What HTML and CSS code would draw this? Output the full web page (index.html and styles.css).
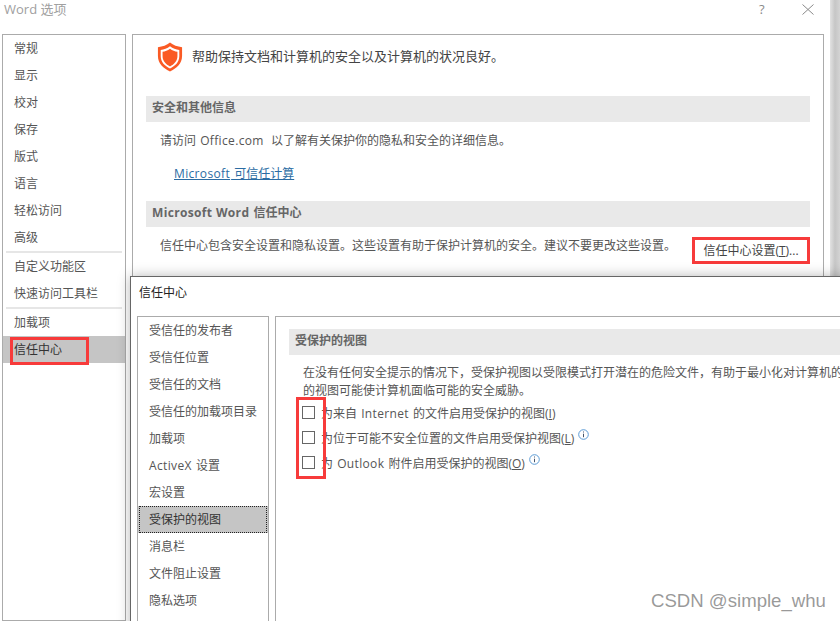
FILE: index.html
```
<!DOCTYPE html>
<html lang="zh-CN">
<head>
<meta charset="utf-8">
<title>Word 选项</title>
<link rel="stylesheet" href="styles.css">
</head>
<body>
<div class="desktop">
  <section class="win-back">
    <header class="titlebar">
      <span class="win-title">Word 选项</span>
      <span class="help">?</span>
      <svg class="close" width="12" height="11" viewBox="0 0 12 11"><path d="M.5.5l11 10M11.500.5l-11 10" stroke="#8a8a8a" fill="none"/></svg>
    </header>
    <div class="back-body">
      <nav class="nav back-nav">
        <div class="item">常规</div>
        <div class="item">显示</div>
        <div class="item">校对</div>
        <div class="item">保存</div>
        <div class="item">版式</div>
        <div class="item">语言</div>
        <div class="item">轻松访问</div>
        <div class="item">高级</div>
        <div class="sep"></div>
        <div class="item">自定义功能区</div>
        <div class="item">快速访问工具栏</div>
        <div class="sep"></div>
        <div class="item">加载项</div>
        <div class="item selected">信任中心</div>
      </nav>
      <main class="back-main">
        <div class="hero">
          <svg class="shield" width="26" height="30" viewBox="0 0 28 32"><path d="M14 .5C10.500 3.500 6 5 1 5.500V15C1 23 7 28.500 14 31.500C21 28.500 27 23 27 15V5.500C22 5 17.500 3.500 14 .5Z" fill="#fa5a24"/><path d="M14 4.500C11 6.700 7.500 8 4 8.500V15.200C4 21.500 8.500 25.800 14 28.300C19.500 25.800 24 21.500 24 15.200V8.500C20.500 8 17 6.700 14 4.500Z" fill="#fff"/><path d="M14 7C11.500 8.800 8.700 9.900 6 10.400V15.200C6 20.300 9.700 24 14 26.100C18.300 24 22 20.300 22 15.200V10.400C19.300 9.900 16.500 8.800 14 7Z" fill="#fa5a24"/></svg>
          <span class="hero-text">帮助保持文档和计算机的安全以及计算机的状况良好。</span>
        </div>
        <h2 class="band band-first">安全和其他信息</h2>
        <p class="line visit">请访问 <span class="lat">Office.com</span>&nbsp; 以了解有关保护你的隐私和安全的详细信息。</p>
        <a class="link"><span class="lat">Microsoft</span> 可信任计算</a>
        <h2 class="band"><span class="lat">Microsoft Word</span> 信任中心</h2>
        <div class="trust-row">
          <p class="line">信任中心包含安全设置和隐私设置。这些设置有助于保护计算机的安全。建议不要更改这些设置。</p>
          <div class="btn-mark">信任中心设置(<u>T</u>)...</div>
        </div>
      </main>
    </div>
  </section>

  <section class="win-front">
    <header class="front-title">信任中心</header>
    <div class="front-body">
      <nav class="nav front-nav">
        <div class="item">受信任的发布者</div>
        <div class="item">受信任位置</div>
        <div class="item">受信任的文档</div>
        <div class="item">受信任的加载项目录</div>
        <div class="item">加载项</div>
        <div class="item"><span class="lat">ActiveX</span> 设置</div>
        <div class="item">宏设置</div>
        <div class="item selected focused"><span>受保护的视图</span></div>
        <div class="item">消息栏</div>
        <div class="item">文件阻止设置</div>
        <div class="item">隐私选项</div>
      </nav>
      <main class="front-main">
        <h2 class="band">受保护的视图</h2>
        <div class="desc">
          <p>在没有任何安全提示的情况下，受保护视图以受限模式打开潜在的危险文件，有助于最小化对计算机的</p>
          <p>的视图可能使计算机面临可能的安全威胁。</p>
        </div>
        <div class="checks">
          <label class="check"><span class="box"></span><span>为来自 <span class="lat">Internet</span> 的文件启用受保护的视图(<u>I</u>)</span></label>
          <label class="check"><span class="box"></span><span>为位于可能不安全位置的文件启用受保护视图(<u>L</u>)</span><svg class="info" width="11" height="11" viewBox="0 0 11 11"><circle cx="5.500" cy="5.500" r="4.800" fill="none" stroke="#5b9bd5"/><path d="M5.500 2.500v1M5.500 4.700v3.500" stroke="#44546a"/></svg></label>
          <label class="check"><span class="box"></span><span>为 <span class="lat">Outlook</span> 附件启用受保护的视图(<u>O</u>)</span><svg class="info" width="11" height="11" viewBox="0 0 11 11"><circle cx="5.500" cy="5.500" r="4.800" fill="none" stroke="#5b9bd5"/><path d="M5.500 2.500v1M5.500 4.700v3.500" stroke="#44546a"/></svg></label>
        </div>
      </main>
    </div>
  </section>

  <div class="mark mark-nav"></div>
  <div class="mark mark-checks"></div>
  <div class="watermark">CSDN @simple_whu</div>
</div>
</body>
</html>
```

FILE: styles.css
```
* { box-sizing: border-box; }
html, body { margin: 0; padding: 0; }
body { font-family: "Open Sans", "Noto Sans CJK SC", sans-serif; font-size: 12px; color: #444; background: #fff; }
.desktop { position: relative; width: 840px; height: 621px; overflow: hidden; background: linear-gradient(90deg, #e2e2e2 830px, #c6c6c6 835px, #d4d4d4 840px); }
h2, p { margin: 0; font-weight: normal; }
.lat { letter-spacing: .35px; margin: 0 1px; }

.win-back { position: absolute; left: 0; top: 0; width: 830px; height: 621px; background: #fff; display: flex; flex-direction: column; }
.titlebar { height: 34px; flex: none; display: flex; align-items: flex-start; position: relative; }
.win-title { margin: 0 0 0 4px; font-size: 13px; line-height: 18px; color: #a0a0a0; }
.help { position: absolute; left: 759px; top: 0; font-size: 13px; line-height: 18px; color: #8a8a8a; }
.close { position: absolute; left: 802px; top: 4px; }
.back-body { flex: 1; display: flex; gap: 6px; padding-left: 2px; padding-right: 6px; min-height: 0; }

.nav { background: #fff; border: 1px solid #ababab; display: flex; flex-direction: column; flex: none; }
.item { height: 27px; line-height: 28px; flex: none; white-space: nowrap; color: #555; }
.back-nav { width: 124px; }
.back-nav .item { padding-left: 11px; }
.back-nav .sep { height: 2px; flex: none; background: #e6e6e6; margin: 0 3px; }
.selected { background: #c5c5c5; color: #333; }

.back-main { flex: 1; border: 1px solid #ababab; border-bottom: 0; padding: 0 13px 0 13px; min-width: 0; }
.hero { display: flex; align-items: center; height: 38px; margin-top: 3px; padding-left: 11px; gap: 9px; color: #444; font-size: 13px; }
.hero-text { margin-top: -3px; }
.shield { flex: none; }
.band { height: 26px; line-height: 24px; background: #e9e9e9; padding-left: 6px; font-size: 12px; font-weight: bold; color: #666; }
.band .lat { margin-left: 0; }
.band-first { margin-top: 20px; }
.line { line-height: 18px; color: #555; white-space: nowrap; }
.visit { padding: 10px 0 0 14px; height: 43px; }
.link { display: block; height: 36px; padding-left: 28px; line-height: 18px; font-size: 12px; color: #2b6ca3; text-decoration: underline; }
.link .lat { margin: 0; padding-right: 1px; }
.trust-row { display: flex; align-items: flex-start; padding: 10px 0 0 14px; position: relative; }
.btn-mark { position: absolute; left: 546px; top: 10px; width: 118px; height: 27px; border: 3px solid #f73b3b; line-height: 21px; text-align: center; color: #444; white-space: nowrap; }

.win-front { position: absolute; left: 130px; top: 276px; width: 720px; height: 360px; background: #fff; border: 1px solid #666; box-shadow: 0 0 12px rgba(0,0,0,.28); display: flex; flex-direction: column; }
.front-title { height: 39px; flex: none; padding: 7px 0 0 8px; line-height: 17px; color: #222; font-size: 12px; }
.front-body { flex: 1; display: flex; gap: 6px; padding-left: 6px; min-height: 0; overflow: hidden; }
.front-nav { width: 132px; }
.front-nav .item { padding-left: 11px; }
.front-nav .lat { margin-left: 0; }
.focused { padding-left: 0 !important; background: #c5c5c5; }
.focused span { display: block; height: 25px; line-height: 26px; margin: 1px 2px; padding-left: 9px; outline: 1px dotted #222; }
.front-main { flex: none; width: 600px; border: 1px solid #ababab; border-bottom: 0; padding: 12px 0 0 13px; overflow: hidden; }
.desc { padding: 9px 0 0 14px; line-height: 18px; color: #555; white-space: nowrap; }
.checks { display: flex; flex-direction: column; padding-left: 13px; }
.check { height: 25px; display: flex; align-items: center; white-space: nowrap; color: #555; }
.box { width: 13px; height: 13px; border: 1px solid #666; background: #fff; margin-right: 6px; flex: none; }
.info { margin: -6px 0 0 4px; flex: none; }

.mark { position: absolute; border: 3px solid #f73b3b; }
.mark-nav { left: 10px; top: 337px; width: 79px; height: 28px; }
.mark-checks { left: 296px; top: 397px; width: 30px; height: 82px; }
.watermark { position: absolute; left: 651px; top: 590px; font-family: "Liberation Sans", sans-serif; font-size: 18.600px; line-height: 22px; color: rgba(120,120,120,.75); white-space: nowrap; }
```
